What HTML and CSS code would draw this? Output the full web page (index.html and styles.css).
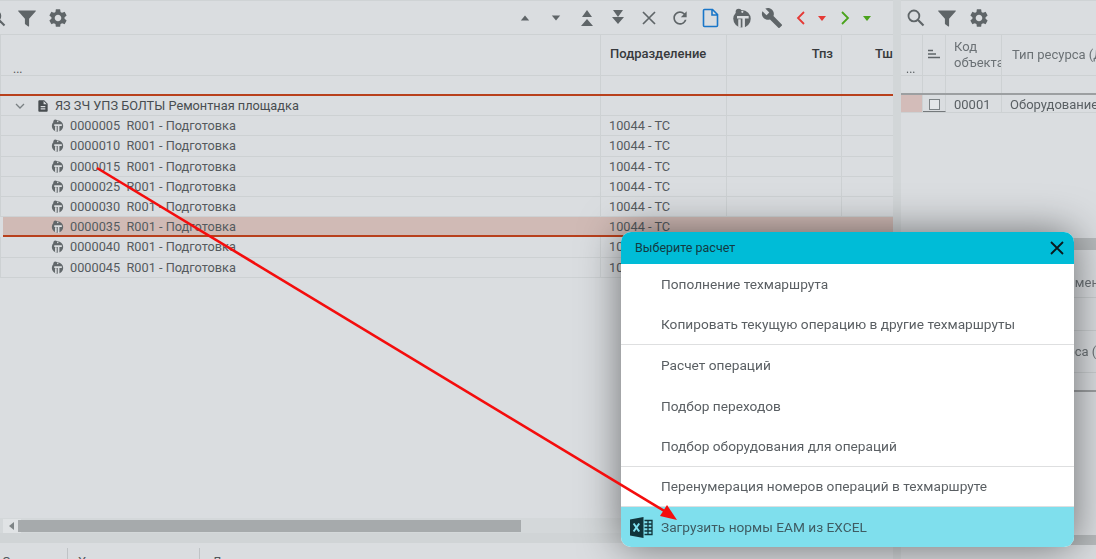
FILE: index.html
```html
<!DOCTYPE html>
<html lang="ru">
<head>
<meta charset="utf-8">
<title>Выберите расчет</title>
<link rel="stylesheet" href="styles.css">
</head>
<body>
<svg class="defs" aria-hidden="true">
  <symbol id="i-search" viewBox="0 0 24 24"><circle cx="9.5" cy="9.5" r="6.5" fill="none" stroke="currentColor" stroke-width="2.2"/><path d="M14.5 14.5L21 21" stroke="currentColor" stroke-width="2.6" fill="none"/></symbol>
  <symbol id="i-filter" viewBox="0 0 24 24"><path fill="currentColor" d="M2 3h20c.6 0 .8.6.5 1L14.5 13v8.5c0 .6-.6.9-1 .6l-3.6-2.6c-.3-.2-.4-.4-.4-.7V13L1.5 4c-.3-.4-.1-1 .5-1z"/></symbol>
  <symbol id="i-gear" viewBox="0 0 24 24"><path fill="currentColor" d="M19.14 12.94c.04-.3.06-.61.06-.94 0-.32-.02-.64-.07-.94l2.03-1.58a.49.49 0 0 0 .12-.61l-1.92-3.32a.488.488 0 0 0-.59-.22l-2.39.96c-.5-.38-1.03-.7-1.62-.94l-.36-2.54a.484.484 0 0 0-.48-.41h-3.84c-.24 0-.43.17-.47.41l-.36 2.54c-.59.24-1.13.57-1.62.94l-2.39-.96c-.22-.08-.47 0-.59.22L2.74 8.87c-.12.21-.08.47.12.61l2.03 1.58c-.05.3-.09.63-.09.94s.02.64.07.94l-2.03 1.58a.49.49 0 0 0-.12.61l1.92 3.32c.12.22.37.29.59.22l2.39-.96c.5.38 1.03.7 1.62.94l.36 2.54c.05.24.24.41.48.41h3.84c.24 0 .44-.17.47-.41l.36-2.54c.59-.24 1.13-.56 1.62-.94l2.39.96c.22.08.47 0 .59-.22l1.92-3.32c.12-.22.07-.47-.12-.61l-2.01-1.58zM12 15.6c-1.98 0-3.6-1.62-3.6-3.6s1.62-3.6 3.6-3.6 3.6 1.62 3.6 3.6-1.62 3.6-3.6 3.6z"/></symbol>
  <symbol id="i-ti" viewBox="0 0 24 24"><circle cx="12" cy="13" r="10.5" fill="currentColor"/><circle cx="8" cy="4.5" r="3.6" fill="currentColor"/><path d="M6 11.2h14M14 11.2V24M9 13.5V23" stroke="#dadde0" stroke-width="3" fill="none"/><circle cx="12.4" cy="4.6" r="1.3" fill="#dadde0"/></symbol>
  <symbol id="i-doc" viewBox="0 0 24 24"><path fill="currentColor" d="M14 2H6c-1.1 0-2 .9-2 2v16c0 1.1.9 2 2 2h12c1.1 0 2-.9 2-2V8l-6-6zm2 16H8v-2h8v2zm0-4H8v-2h8v2zm-3-5V3.5L18.5 9H13z"/></symbol>
</svg>

<main class="page">
  <div class="panes">
    <section class="left">
      <div class="toolbar">
        <div class="tool-group tool-group-left">
          <svg class="ic ic-20"><use href="#i-search"/></svg>
          <svg class="ic ic-20"><use href="#i-filter"/></svg>
          <svg class="ic ic-22"><use href="#i-gear"/></svg>
        </div>
        <div class="tool-group tool-group-right">
          <svg class="ic ic-20" viewBox="0 0 24 24"><path fill="currentColor" d="M7 15l5-6 5 6z"/></svg>
          <svg class="ic ic-20" viewBox="0 0 24 24"><path fill="currentColor" d="M7 9h10l-5 6z"/></svg>
          <svg class="ic ic-20" viewBox="0 0 20 20"><path fill="currentColor" d="M5 9l5-7 5 7zM4 18l6-7 6 7z"/></svg>
          <svg class="ic ic-20" viewBox="0 0 20 20"><path fill="currentColor" d="M5 2h10l-5 7zM4 9h12l-6 7z"/></svg>
          <svg class="ic ic-20" viewBox="0 0 20 20"><path d="M4 4l12 12M16 4L4 16" stroke="currentColor" stroke-width="1.7" fill="none"/></svg>
          <svg class="ic ic-20" viewBox="0 0 24 24"><path fill="currentColor" d="M17.65 6.35A7.958 7.958 0 0 0 12 4c-4.42 0-7.99 3.58-7.99 8s3.57 8 7.99 8c3.73 0 6.84-2.55 7.73-6h-2.08A5.99 5.99 0 0 1 12 18c-3.31 0-6-2.69-6-6s2.69-6 6-6c1.66 0 3.14.69 4.22 1.78L13 11h7V4l-2.35 2.35z"/></svg>
          <svg class="ic ic-20 ic-blue" viewBox="0 0 20 20"><path d="M3.5 1.5h8l5 5v11a1 1 0 0 1-1 1h-12a1 1 0 0 1-1-1v-15a1 1 0 0 1 1-1zM11 1.5v5.5h5.5" fill="none" stroke="currentColor" stroke-width="1.6"/></svg>
          <svg class="ic ic-20"><use href="#i-ti"/></svg>
          <svg class="ic ic-24" viewBox="0 0 24 24"><path fill="currentColor" d="M22.7 19l-9.1-9.1c.9-2.3.4-5-1.5-6.9-2-2-5-2.4-7.4-1.3L9 6 6 9 1.6 4.7C.4 7.1.9 10.1 2.9 12.1c1.9 1.9 4.6 2.4 6.9 1.5l9.1 9.1c.4.4 1 .4 1.4 0l2.3-2.3c.5-.4.5-1.1.1-1.4z"/></svg>
          <div class="nav-pair nav-red">
            <svg class="ic ic-12" viewBox="0 0 12 14"><path d="M9 1L3 7l6 6" fill="none" stroke="currentColor" stroke-width="1.8"/></svg>
            <svg class="ic ic-10" viewBox="0 0 10 10"><path fill="currentColor" d="M1 3h8L5 8z"/></svg>
          </div>
          <div class="nav-pair nav-green">
            <svg class="ic ic-12" viewBox="0 0 12 14"><path d="M3 1l6 6-6 6" fill="none" stroke="currentColor" stroke-width="1.8"/></svg>
            <svg class="ic ic-10" viewBox="0 0 10 10"><path fill="currentColor" d="M1 3h8L5 8z"/></svg>
          </div>
        </div>
      </div>

      <div class="grid-row grid-head">
        <div class="cell cell-dots">...</div>
        <div class="cell head-title">Подразделение</div>
        <div class="cell head-title head-right">Тпз</div>
        <div class="cell head-title head-right head-last">Тш</div>
      </div>
      <div class="grid-row grid-filter"><div class="cell"></div><div class="cell"></div><div class="cell"></div><div class="cell"></div></div>

      <div class="grid-row data-row">
        <div class="cell cell-tree level-0">
          <svg class="ic chevron" viewBox="0 0 12 12"><path d="M2 4l4 4 4-4" fill="none" stroke="currentColor" stroke-width="1.3"/></svg>
          <svg class="ic ic-14"><use href="#i-doc"/></svg>
          <span class="group-name">ЯЗ ЗЧ УПЗ БОЛТЫ Ремонтная площадка</span>
        </div>
        <div class="cell"></div><div class="cell"></div><div class="cell"></div>
      </div>
      <div class="grid-row data-row"><div class="cell cell-tree level-1"><svg class="ic ic-13"><use href="#i-ti"/></svg><span>0000005&nbsp; R001 - Подготовка</span></div><div class="cell cell-sub">10044 - ТС</div><div class="cell"></div><div class="cell"></div></div>
      <div class="grid-row data-row"><div class="cell cell-tree level-1"><svg class="ic ic-13"><use href="#i-ti"/></svg><span>0000010&nbsp; R001 - Подготовка</span></div><div class="cell cell-sub">10044 - ТС</div><div class="cell"></div><div class="cell"></div></div>
      <div class="grid-row data-row"><div class="cell cell-tree level-1"><svg class="ic ic-13"><use href="#i-ti"/></svg><span>0000015&nbsp; R001 - Подготовка</span></div><div class="cell cell-sub">10044 - ТС</div><div class="cell"></div><div class="cell"></div></div>
      <div class="grid-row data-row"><div class="cell cell-tree level-1"><svg class="ic ic-13"><use href="#i-ti"/></svg><span>0000025&nbsp; R001 - Подготовка</span></div><div class="cell cell-sub">10044 - ТС</div><div class="cell"></div><div class="cell"></div></div>
      <div class="grid-row data-row"><div class="cell cell-tree level-1"><svg class="ic ic-13"><use href="#i-ti"/></svg><span>0000030&nbsp; R001 - Подготовка</span></div><div class="cell cell-sub">10044 - ТС</div><div class="cell"></div><div class="cell"></div></div>
      <div class="grid-row data-row data-row-active"><div class="cell cell-tree level-1"><svg class="ic ic-13"><use href="#i-ti"/></svg><span>0000035&nbsp; R001 - Подготовка</span></div><div class="cell cell-sub">10044 - ТС</div><div class="cell"></div><div class="cell"></div></div>
      <div class="grid-row data-row"><div class="cell cell-tree level-1"><svg class="ic ic-13"><use href="#i-ti"/></svg><span>0000040&nbsp; R001 - Подготовка</span></div><div class="cell cell-sub">10044 - ТС</div><div class="cell"></div><div class="cell"></div></div>
      <div class="grid-row data-row"><div class="cell cell-tree level-1"><svg class="ic ic-13"><use href="#i-ti"/></svg><span>0000045&nbsp; R001 - Подготовка</span></div><div class="cell cell-sub">10044 - ТС</div><div class="cell"></div><div class="cell"></div></div>

      <div class="spacer"></div>
      <div class="hscroll">
        <div class="hscroll-btn"><svg class="ic ic-8" viewBox="0 0 8 10"><path fill="currentColor" d="M6 1v8L1 5z"/></svg></div>
        <div class="hscroll-thumb"></div>
      </div>
      <div class="under-band"></div>
      <nav class="tabs">
        <span class="tab tab-first">Операции</span>
        <span class="tab tab-second">Характеристики</span>
        <span class="tab tab-third">Документы</span>
      </nav>
    </section>

    <div class="splitter"></div>

    <section class="right">
      <div class="toolbar">
        <div class="tool-group tool-group-res">
          <svg class="ic ic-20"><use href="#i-search"/></svg>
          <svg class="ic ic-20"><use href="#i-filter"/></svg>
          <svg class="ic ic-22"><use href="#i-gear"/></svg>
        </div>
      </div>
      <div class="res-row res-head">
        <div class="res-cell cell-dots-res">...</div>
        <div class="res-cell res-sort"><svg class="ic ic-14" viewBox="0 0 14 14"><path d="M1 3.5h5M1 7h8M1 10.5h12" stroke="currentColor" stroke-width="1.4" fill="none"/></svg></div>
        <div class="res-cell res-code">Код объекта</div>
        <div class="res-cell res-type">Тип ресурса (Д</div>
      </div>
      <div class="res-row res-filter">
        <div class="res-cell cell-dots-res"></div><div class="res-cell res-sort"></div><div class="res-cell res-code"></div><div class="res-cell res-type"></div>
      </div>
      <div class="res-row res-data">
        <div class="res-cell cell-dots-res res-pink"></div>
        <div class="res-cell res-sort res-check"><span class="checkbox"></span></div>
        <div class="res-cell res-code res-value">00001</div>
        <div class="res-cell res-type res-value">Оборудование</div>
      </div>
      <div class="res-gap"></div>
      <div class="sub-band"></div>
      <div class="sub-head"><span>Наименование</span></div>
      <div class="sub-filter"></div>
      <div class="sub-value"><span>Тип ресурса (Д</span></div>
      <div class="sub-end"></div>
      <div class="res-gap-2"></div>
      <div class="sub-band sub-band-low"></div>
    </section>
  </div>

  <div class="modal">
    <header class="modal-head">
      <span>Выберите расчет</span>
      <svg class="modal-close" viewBox="0 0 14 14"><path d="M1 1l12 12M13 1L1 13" stroke="currentColor" stroke-width="1.8" fill="none"/></svg>
    </header>
    <ul class="menu">
      <li class="menu-item">Пополнение техмаршрута</li>
      <li class="menu-item menu-item-sep">Копировать текущую операцию в другие техмаршруты</li>
      <li class="menu-item">Расчет операций</li>
      <li class="menu-item">Подбор переходов</li>
      <li class="menu-item menu-item-sep">Подбор оборудования для операций</li>
      <li class="menu-item menu-item-sep">Перенумерация номеров операций в техмаршруте</li>
      <li class="menu-item menu-item-active">
        <svg class="excel" viewBox="0 0 23 23"><path fill="#10343b" d="M0 3.5L13.5 1v21L0 19.5z"/><path d="M3.6 7.5l5.6 8M9.2 7.5l-5.6 8" stroke="#7fdfed" stroke-width="2" fill="none"/><path d="M14.5 4.5h7.5v14h-7.5M14.5 8h7.5M14.5 11.5h7.5M14.5 15h7.5M18 4.5v14" stroke="#10343b" stroke-width="1.3" fill="none"/></svg>
        <span>Загрузить нормы EAM из EXCEL</span>
      </li>
    </ul>
  </div>

  <svg class="arrow" viewBox="0 0 1096 559" aria-hidden="true">
    <path d="M97 168L666 512" stroke="#f40d0d" stroke-width="2.6" fill="none"/>
    <path d="M677 520L660 516L667 505z" fill="#f40d0d"/>
  </svg>
</main>
</body>
</html>
```
FILE: styles.css
```css
* { box-sizing: border-box; }
html, body { margin: 0; padding: 0; }
body {
  width: 1096px;
  height: 559px;
  overflow: hidden;
  background: #dadde0;
  color: #555a5e;
  font: 12.75px/18px Roboto, "Liberation Sans", sans-serif;
}
.defs { position: absolute; width: 0; height: 0; }
.page { position: relative; width: 1096px; height: 559px; overflow: hidden; filter: blur(.35px); }
.panes { display: flex; height: 100%; }

.left {
  width: 893px;
  flex: none;
  display: flex;
  flex-direction: column;
  background: linear-gradient(#e0c2ba, #e0c2ba) 0 0 / 273px 1px no-repeat, #dadde0;
}
.splitter { width: 8px; flex: none; background: #d2d6d8; }
.right { flex: 1; min-width: 0; display: flex; flex-direction: column; overflow: hidden; }

.toolbar {
  height: 35px;
  flex: none;
  display: flex;
  align-items: center;
  justify-content: space-between;
  border-top: 1px solid #cfd3d5;
  border-bottom: 1px solid #cdd1d3;
  color: #5f6568;
}
.tool-group { display: flex; align-items: center; }
.tool-group-left { margin-left: -13px; gap: 10px; }
.tool-group-right { gap: 11px; margin-right: 21px; }
.tool-group-res { margin-left: 5px; gap: 11px; }
.ic { display: block; flex: none; }
.ic-8 { width: 8px; height: 10px; }
.ic-10 { width: 10px; height: 10px; }
.ic-12 { width: 12px; height: 14px; }
.ic-13 { width: 13px; height: 13px; color: #62686b; }
.ic-14 { width: 14px; height: 14px; }
.ic-20 { width: 20px; height: 20px; }
.ic-22 { width: 22px; height: 22px; }
.ic-24 { width: 22px; height: 22px; margin: 0 2px 0 -2px; }
.ic-blue { color: #1976c8; }
.nav-pair { display: flex; align-items: center; }
.nav-red { color: #e53935; margin-left: -1px; gap: 10px; }
.nav-green { color: #4aa31c; margin-left: 1px; gap: 11px; }

.grid-row {
  display: grid;
  grid-template-columns: 601px 126px 115px 51px;
  border-bottom: 1px solid #cdd1d3;
}
.cell { border-right: 1px solid #cdd1d3; min-width: 0; overflow: hidden; white-space: nowrap; }
.cell:first-child { border-left: 1px solid #cdd1d3; }
.cell:last-child { border-right: 0; }
.grid-head { height: 41px; }
.grid-filter { height: 20px; border-bottom: 2px solid #b8401c; }
.cell-dots { padding: 28px 0 0 12px; line-height: 12px; color: #555; font-size: 12px; }
.head-title { padding: 10px 8px 0 9px; font-weight: 500; font-size: 13px; color: #37393c; }
.head-right { text-align: right; }
.head-last { padding-right: 0; }

.data-row { height: 20.2px; line-height: 19px; }
.cell-tree { display: flex; align-items: center; }
.level-0 { padding-left: 13px; color: #484d50; }
.level-1 { padding-left: 50px; gap: 6px; }
.chevron { width: 12px; height: 12px; color: #7a8083; margin-right: 10px; }
.group-name { margin-left: 5px; }
.cell-sub { padding-left: 8px; }
.data-row-active { background: #d0bab5; border-bottom: 0; position: relative; margin-left: 3px; grid-template-columns: 598px 126px 115px 51px; }
.data-row-active .cell { border: 0; border-bottom: 2px solid #b8401c; }
.data-row-active .level-1 { padding-left: 48px; }

.spacer { flex: 1; }
.hscroll { height: 15px; flex: none; display: flex; align-items: center; background: #d4d8da; }
.hscroll-btn { width: 18px; height: 14px; display: flex; align-items: center; justify-content: center; background: #e0e3e5; margin-left: 3px; margin-right: -3px; color: #7e8486; }
.hscroll-thumb { width: 503px; height: 12px; background: #a6aaac; }
.under-band { height: 10px; flex: none; background: #d0d4d6; }
.tabs { height: 16px; flex: none; display: flex; overflow: hidden; padding-top: 5px; }
.tab { border-right: 1px solid #bfc3c6; height: 30px; padding: 4px 10px 0; line-height: 20px; white-space: nowrap; color: #51575b; font-size: 13px; }
.tab-first { width: 68px; padding-left: 2px; padding-right: 0; overflow: hidden; }
.tab-second { width: 132px; }
.tab-third { padding-left: 12px; border-right: 0; }

.res-row { display: grid; grid-template-columns: 22px 23px 56px 1fr; flex: none; }
.res-cell { min-width: 0; overflow: hidden; white-space: nowrap; border-right: 1px solid #cdd1d3; }
.res-head { height: 41px; border-bottom: 1px solid #cdd1d3; }
.cell-dots-res { padding: 28px 0 0 5px; line-height: 12px; font-size: 12px; }
.res-sort { display: flex; justify-content: center; padding-top: 12px; color: #5f6568; }
.res-code { padding: 4px 0 0 8px; line-height: 16px; white-space: normal; color: #6b7175; font-size: 13px; }
.res-type { padding: 11px 0 0 10px; border-right: 0; color: #6b7175; font-size: 13px; }
.res-filter { height: 19px; border-bottom: 2px solid #9c9fa1; }
.res-filter .res-cell { padding: 0; }
.res-data { height: 18px; border-bottom: 1px solid #cdd1d3; line-height: 18px; }
.res-pink { background: #d3bcb9; padding: 0; }
.res-check { padding-top: 4px; border-bottom: 1px solid #75797c; }
.checkbox { display: block; width: 11px; height: 11px; border: 1px solid #7c8285; background: #e4e7e9; }
.res-value { padding-top: 2px; padding-left: 8px; color: #5a6064; line-height: 16px; }
.res-type.res-value { padding-left: 8px; padding-top: 2px; }
.res-gap { height: 125px; flex: none; }
.sub-band { height: 12px; flex: none; background: #b6babc; }
.sub-head { height: 48px; flex: none; padding: 24px 0 0 150px; border-bottom: 1px solid #c9cdcf; white-space: nowrap; line-height: 18px; color: #6b7175; font-size: 13px; }
.sub-head span { display: block; }
.sub-filter { height: 33px; flex: none; border-bottom: 1px solid #c9cdcf; }
.sub-value { height: 42px; flex: none; padding: 12px 0 0 114px; border-bottom: 1px solid #c9cdcf; white-space: nowrap; color: #6b7175; font-size: 13px; }
.sub-end { height: 19px; flex: none; border-bottom: 2px solid #9c9fa1; }
.res-gap-2 { height: 143px; flex: none; }
.sub-band-low { height: 10px; }

.modal {
  position: absolute;
  left: 621px;
  top: 232px;
  width: 453px;
  height: 315px;
  border-radius: 10px;
  overflow: hidden;
  background: #fff;
  box-shadow: 0 0 40px rgba(0, 0, 0, .5);
  display: flex;
  flex-direction: column;
}
.modal-head {
  height: 32px;
  flex: none;
  display: flex;
  align-items: center;
  justify-content: space-between;
  padding: 0 10px 0 14px;
  background: #00bcd7;
  color: #133a42;
  font-size: 12.5px;
}
.modal-close { width: 14px; height: 14px; color: #0a1a1e; }
.menu { list-style: none; margin: 0; padding: 0; flex: 1; display: flex; flex-direction: column; font-size: 13.7px; }
.menu-item {
  height: 40.5px;
  flex: none;
  display: flex;
  align-items: center;
  padding: 0 0 0 40px;
  color: #5a5f63;
}
.menu-item-sep { border-bottom: 1px solid #dedfe0; }
.menu-item-active { flex: 1; padding-left: 9px; gap: 8px; background: #7fdfed; color: #3f5c63; }
.excel { width: 23px; height: 23px; flex: none; }

.arrow { position: absolute; inset: 0; width: 1096px; height: 559px; pointer-events: none; }
```
